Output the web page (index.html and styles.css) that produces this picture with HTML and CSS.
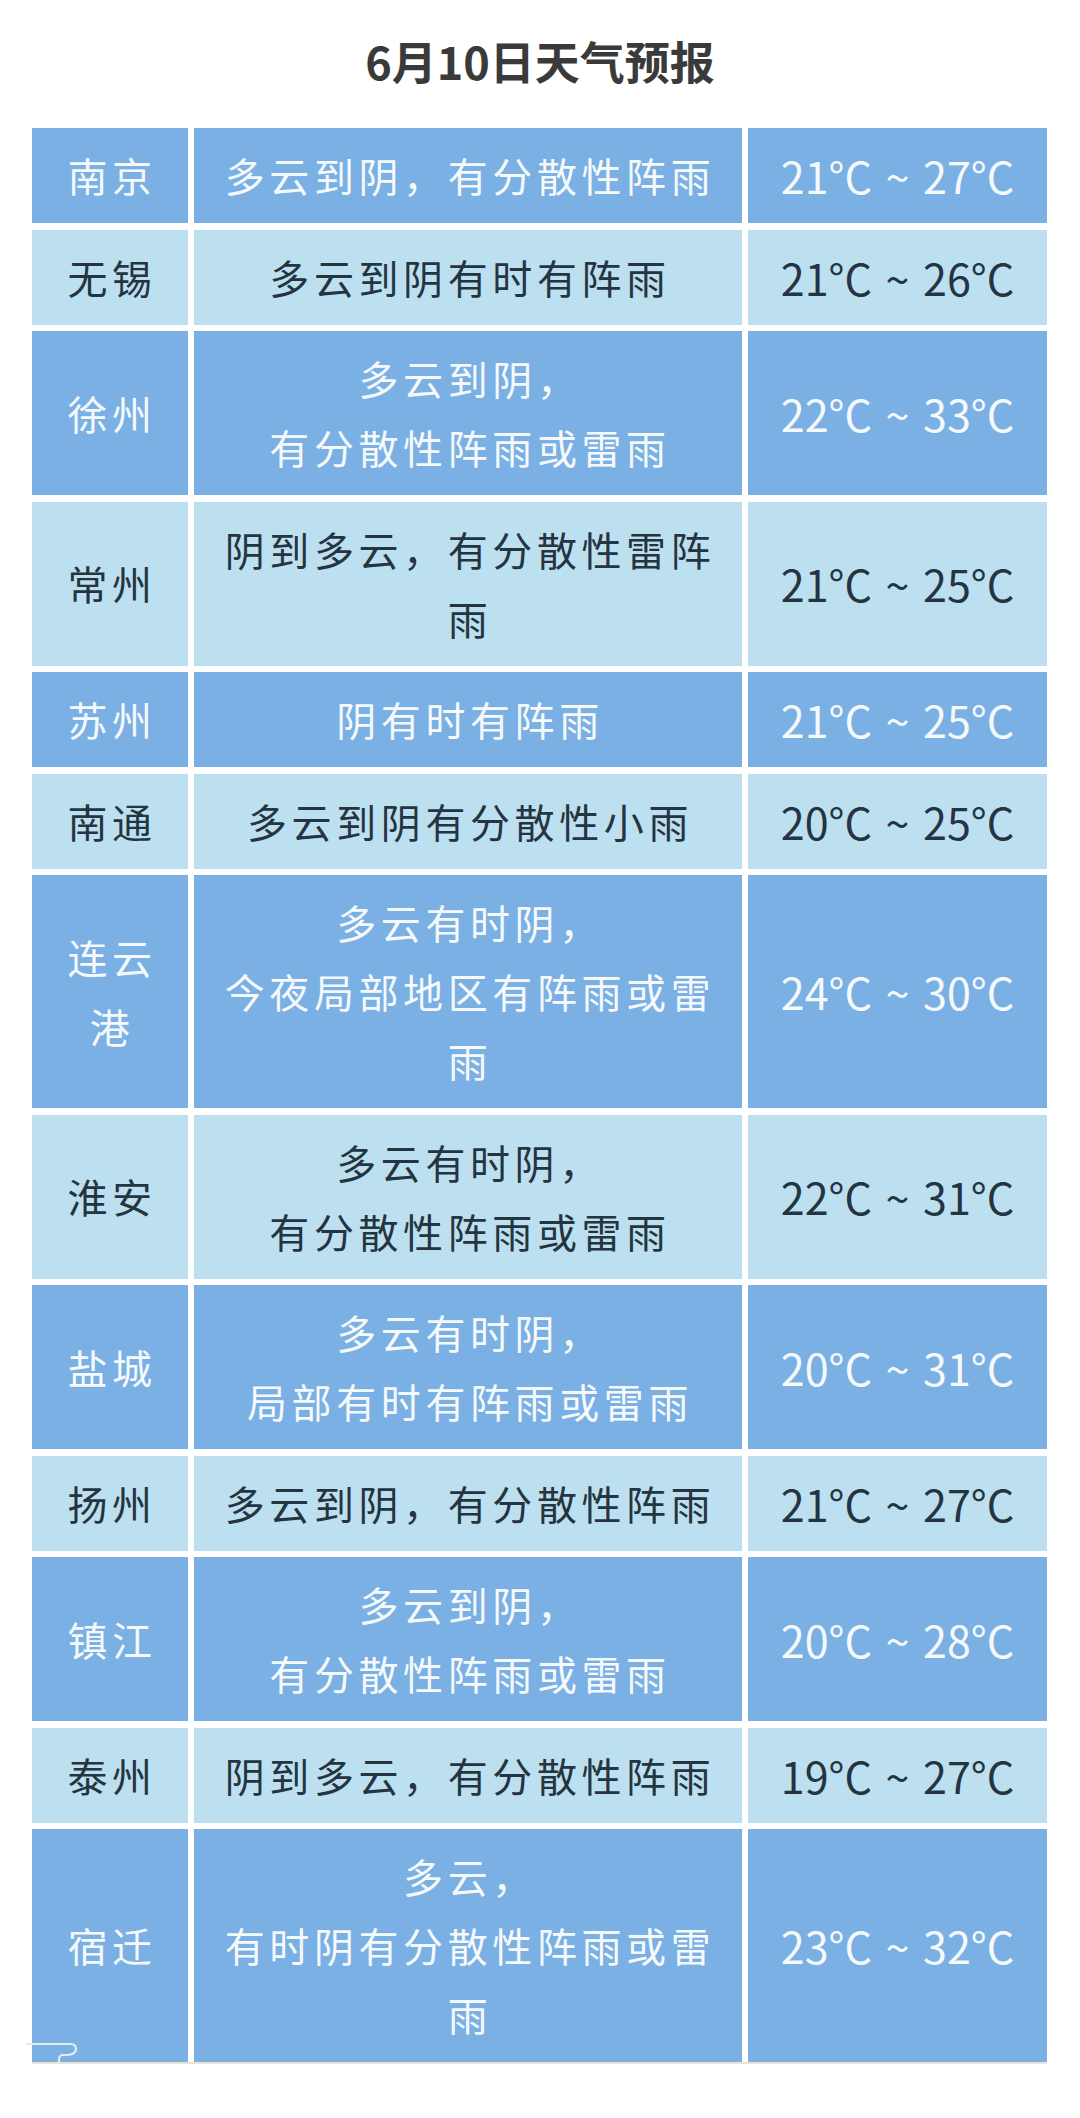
FILE: index.html
```html
<!DOCTYPE html>
<html lang="zh-CN">
<head>
<meta charset="utf-8">
<title>6月10日天气预报</title>
<link rel="stylesheet" href="styles.css">
</head>
<body>
<div class="page">
  <h1 class="title">6月10日天气预报</h1>
  <div class="table">
    <div class="row dark"><div class="cell city">南京</div><div class="cell desc">多云到阴，有分散性阵雨</div><div class="cell temp">21°C ~ 27°C</div></div>
    <div class="row light"><div class="cell city">无锡</div><div class="cell desc">多云到阴有时有阵雨</div><div class="cell temp">21°C ~ 26°C</div></div>
    <div class="row dark"><div class="cell city">徐州</div><div class="cell desc">多云到阴，<br>有分散性阵雨或雷雨</div><div class="cell temp">22°C ~ 33°C</div></div>
    <div class="row light"><div class="cell city">常州</div><div class="cell desc">阴到多云，有分散性雷阵<br>雨</div><div class="cell temp">21°C ~ 25°C</div></div>
    <div class="row dark"><div class="cell city">苏州</div><div class="cell desc">阴有时有阵雨</div><div class="cell temp">21°C ~ 25°C</div></div>
    <div class="row light"><div class="cell city">南通</div><div class="cell desc">多云到阴有分散性小雨</div><div class="cell temp">20°C ~ 25°C</div></div>
    <div class="row dark"><div class="cell city">连云<br>港</div><div class="cell desc">多云有时阴，<br>今夜局部地区有阵雨或雷<br>雨</div><div class="cell temp">24°C ~ 30°C</div></div>
    <div class="row light"><div class="cell city">淮安</div><div class="cell desc">多云有时阴，<br>有分散性阵雨或雷雨</div><div class="cell temp">22°C ~ 31°C</div></div>
    <div class="row dark"><div class="cell city">盐城</div><div class="cell desc">多云有时阴，<br>局部有时有阵雨或雷雨</div><div class="cell temp">20°C ~ 31°C</div></div>
    <div class="row light"><div class="cell city">扬州</div><div class="cell desc">多云到阴，有分散性阵雨</div><div class="cell temp">21°C ~ 27°C</div></div>
    <div class="row dark"><div class="cell city">镇江</div><div class="cell desc">多云到阴，<br>有分散性阵雨或雷雨</div><div class="cell temp">20°C ~ 28°C</div></div>
    <div class="row light"><div class="cell city">泰州</div><div class="cell desc">阴到多云，有分散性阵雨</div><div class="cell temp">19°C ~ 27°C</div></div>
    <div class="row dark"><div class="cell city">宿迁</div><div class="cell desc">多云，<br>有时阴有分散性阵雨或雷<br>雨</div><div class="cell temp">23°C ~ 32°C</div></div>
    <svg class="mark" width="70" height="34" viewBox="0 0 70 34" aria-hidden="true"><path d="M7 10 H50 Q56 10 56 15 Q56 20 48 21 H42 Q39 22 39 25 V28" fill="none" stroke="#e4ebee" stroke-width="2.2" stroke-linecap="round"/></svg>
  </div>
</div>
</body>
</html>
```
FILE: styles.css
```css
html, body {
  margin: 0;
  padding: 0;
  background: #ffffff;
}
body {
  width: 1080px;
  height: 2118px;
  overflow: hidden;
  font-family: "Noto Sans CJK SC", "Noto Sans", sans-serif;
}
.page {
  display: flex;
  flex-direction: column;
}
.title {
  margin: 0 0 6px 0;
  height: 122px;
  line-height: 122px;
  text-align: center;
  font-size: 45px;
  font-weight: 700;
  color: #3a3a3a;
}
.table {
  position: relative;
  margin-left: 32px;
  width: 1015px;
  display: flex;
  flex-direction: column;
  row-gap: 6.5px;
  border-bottom: 2px solid #ece4d0;
}
.row {
  display: grid;
  grid-template-columns: 156px 548px 299px;
  column-gap: 6px;
}
.cell {
  display: flex;
  align-items: center;
  justify-content: center;
  text-align: center;
  padding: 13px 0;
  line-height: 69px;
  font-size: 40px;
  letter-spacing: 4.6px;
  white-space: nowrap;
}
.city {
  padding-left: 4px;
}
.desc {
  padding-left: 4px;
}
.temp {
  font-size: 43px;
  letter-spacing: 0;
  word-spacing: 4px;
}
.dark .cell {
  background: #7ab0e3;
  color: #f5f9fb;
}
.light .cell {
  background: #bde0f0;
  color: #243440;
}
.mark {
  position: absolute;
  left: -12px;
  bottom: -6px;
}
```
